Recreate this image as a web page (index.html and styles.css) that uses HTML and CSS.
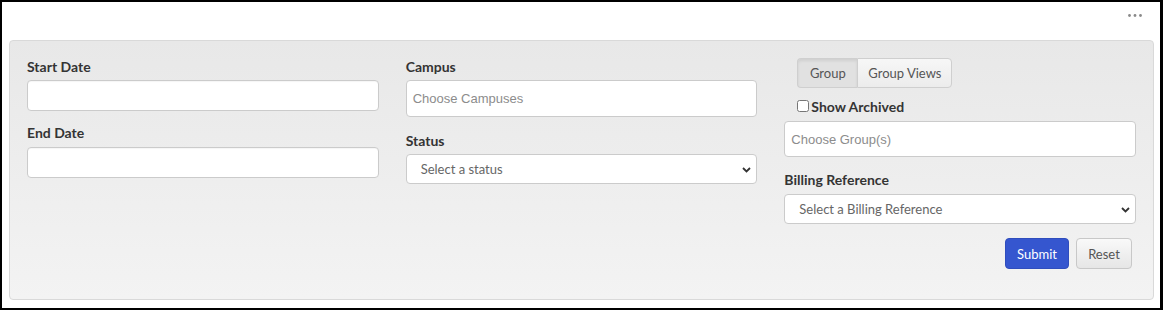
FILE: index.html
```html
<!DOCTYPE html>
<html lang="en">
<head>
    <meta charset="UTF-8">
    <meta name="viewport" content="width=device-width, initial-scale=1.0">
    <title>Filter</title>
    <link rel="stylesheet" href="styles.css">
</head>
<body>
    <div class="frame">
        <div class="topbar">
            <svg class="dots" width="14" height="3" viewBox="0 0 14 3">
                <circle cx="1.5" cy="1.5" r="1.4" fill="#8a8a8a"/>
                <circle cx="7" cy="1.5" r="1.4" fill="#8a8a8a"/>
                <circle cx="12.5" cy="1.5" r="1.4" fill="#8a8a8a"/>
            </svg>
        </div>
        <div class="panel">
            <div class="col">
                <label class="lbl">Start Date</label>
                <input class="field" type="text">
                <label class="lbl lbl-next">End Date</label>
                <input class="field" type="text">
            </div>
            <div class="col">
                <label class="lbl">Campus</label>
                <div class="picker">Choose Campuses</div>
                <label class="lbl lbl-status">Status</label>
                <div class="select">
                    <span>Select a status</span>
                    <svg class="chev" width="9" height="6" viewBox="0 0 9 6"><path d="M1 1l3.5 3.5L8 1" fill="none" stroke="#333" stroke-width="1.8"/></svg>
                </div>
            </div>
            <div class="col">
                <div class="btn-group">
                    <button class="toggle active">Group</button>
                    <button class="toggle">Group Views</button>
                </div>
                <label class="check"><input type="checkbox"> Show Archived</label>
                <div class="picker picker-group">Choose Group(s)</div>
                <label class="lbl lbl-billing">Billing Reference</label>
                <div class="select">
                    <span>Select a Billing Reference</span>
                    <svg class="chev" width="9" height="6" viewBox="0 0 9 6"><path d="M1 1l3.5 3.5L8 1" fill="none" stroke="#333" stroke-width="1.8"/></svg>
                </div>
                <div class="actions">
                    <button class="btn btn-primary">Submit</button>
                    <button class="btn btn-default">Reset</button>
                </div>
            </div>
        </div>
    </div>
</body>
</html>
```

FILE: styles.css
```css
*{
    margin: 0;
    padding: 0;
    box-sizing: border-box;
}

body{
    background: #fff;
    font-family: Lato, "Liberation Sans", sans-serif;
    color: #343434;
}

.frame{
    width: 1163px;
    height: 310px;
    border-style: solid;
    border-color: #000;
    border-width: 2px 3px 2px 2px;
    padding: 0 6px 8px 7px;
    display: flex;
    flex-direction: column;
}

.topbar{
    height: 38px;
    display: flex;
    justify-content: flex-end;
    align-items: flex-start;
    padding: 12px 12px 0 0;
}

.panel{
    flex: 1;
    border: 1px solid #d9d9d9;
    border-radius: 4px;
    background: linear-gradient(#e8e8e8, #f3f3f3);
    padding: 17px 17px 0 17px;
    display: grid;
    grid-template-columns: 1fr 1fr 1fr;
    column-gap: 27px;
}

.col{
    display: flex;
    flex-direction: column;
}

.lbl{
    display: block;
    font-size: 14px;
    font-weight: 700;
    line-height: 18px;
    height: 18px;
    margin-bottom: 4px;
}

.lbl-next{
    margin-top: 13px;
    margin-bottom: 5px;
}

.lbl-status{
    margin-top: 15px;
}

.lbl-billing{
    margin-top: 14px;
    margin-bottom: 5px;
}

.field{
    height: 31px;
    border: 1px solid #cbcbcb;
    border-radius: 4px;
    background: #fff;
    box-shadow: inset 0 1px 1px rgba(0,0,0,0.04);
}

.picker{
    height: 37px;
    border: 1px solid #cbcbcb;
    border-radius: 4px;
    background: #fff;
    padding-left: 6px;
    display: flex;
    align-items: center;
    font-family: "Liberation Sans", Arial, sans-serif;
    font-size: 13px;
    color: #8c8c8c;
}

.picker-group{
    height: 36px;
    margin-top: 6px;
}

.select{
    position: relative;
    height: 30px;
    border: 1px solid #cbcbcb;
    border-radius: 4px;
    background: #fff;
    padding-left: 14px;
    display: flex;
    align-items: center;
    font-size: 13px;
    color: #666;
}

.chev{
    position: absolute;
    right: 5px;
    top: 12px;
}

.btn-group{
    display: flex;
    margin-left: 13px;
    height: 30px;
}

.toggle{
    font-family: Lato, "Liberation Sans", sans-serif;
    font-size: 13px;
    color: #555;
    border: 1px solid #cfcfcf;
    background: linear-gradient(#f7f7f7, #ececec);
    padding: 0 10px;
    height: 30px;
}

.toggle.active{
    background: #e1e1e1;
    box-shadow: inset 0 2px 3px rgba(0,0,0,0.08);
    border-radius: 4px 0 0 4px;
    width: 60px;
    border-right: none;
}

.toggle + .toggle{
    border-radius: 0 4px 4px 0;
}

.check{
    display: flex;
    align-items: center;
    margin: 9px 0 0 13px;
    height: 18px;
    font-size: 14px;
    font-weight: 700;
    gap: 2px;
}

.check input{
    width: 12px;
    height: 12px;
    margin: 0;
}

.actions{
    display: flex;
    justify-content: flex-end;
    gap: 7px;
    margin-top: 14px;
    padding-right: 4px;
}

.btn{
    height: 31px;
    border-radius: 4px;
    font-family: Lato, "Liberation Sans", sans-serif;
    font-size: 13px;
    padding: 0 11px;
}

.btn-primary{
    background: #3556cf;
    border: 1px solid #2f4dbd;
    color: #fff;
    width: 64px;
}

.btn-default{
    background: linear-gradient(#f9f9f9, #e6e6e6);
    border: 1px solid #c8c8c8;
    color: #555;
    width: 56px;
}
```
